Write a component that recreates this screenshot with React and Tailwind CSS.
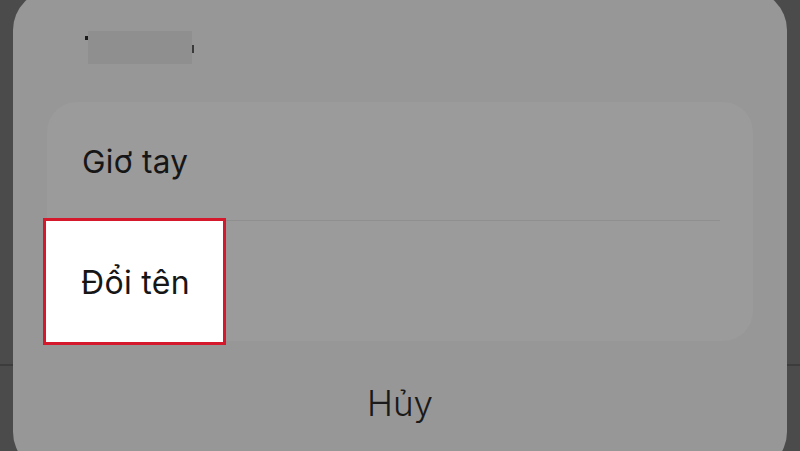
export default function App() {
  return (
    <div className="relative h-[451px] w-[800px] overflow-hidden bg-[#4b4b4b] px-[13px] font-['Inter','Roboto',sans-serif]">
      {/* separator of the screen behind the sheet */}
      <div className="absolute left-0 right-0 top-[364px] h-[2px] bg-[#3c3c3c]" />

      <div className="relative z-10 -mt-[10px] h-[482px] rounded-[40px] bg-[#979797] px-[34px]">
        {/* blurred title */}
        <div className="flex h-[112px] items-start pl-[38px] pt-[41px]">
          <div className="mt-[5px] h-[4px] w-[3px] bg-[#1b1b1b]" />
          <div className="h-[33px] w-[104px] bg-[#8f8f8f]" />
          <div className="mt-[14px] h-[8px] w-[2px] bg-[#3a3a3a]" />
        </div>

        {/* action group */}
        <div className="h-[239px] rounded-[30px] bg-[#9b9b9b] pl-[35px] pr-[33px]">
          <div className="flex h-[119px] items-center border-b border-[#8f8f8f] pt-[2px]">
            <span className="text-[31.5px] leading-none tracking-[0.3px] text-[#161616]">Giơ tay</span>
          </div>
          <div className="relative flex h-[120px] items-center pt-[4px]">
            <div className="absolute -left-[39px] -top-[3px] h-[127px] w-[183px] border-[3px] border-[#d5182c] bg-white" />
            <span className="relative -ml-[1px] text-[32px] leading-none tracking-[0.3px] text-[#161616]">Đổi tên</span>
          </div>
        </div>

        {/* cancel */}
        <div className="flex h-[130px] items-center justify-center pt-[4px] pb-[10px]">
          <span className="text-[35px] font-light leading-none text-[#1a1a1a]">Hủy</span>
        </div>
      </div>
    </div>
  );
}
